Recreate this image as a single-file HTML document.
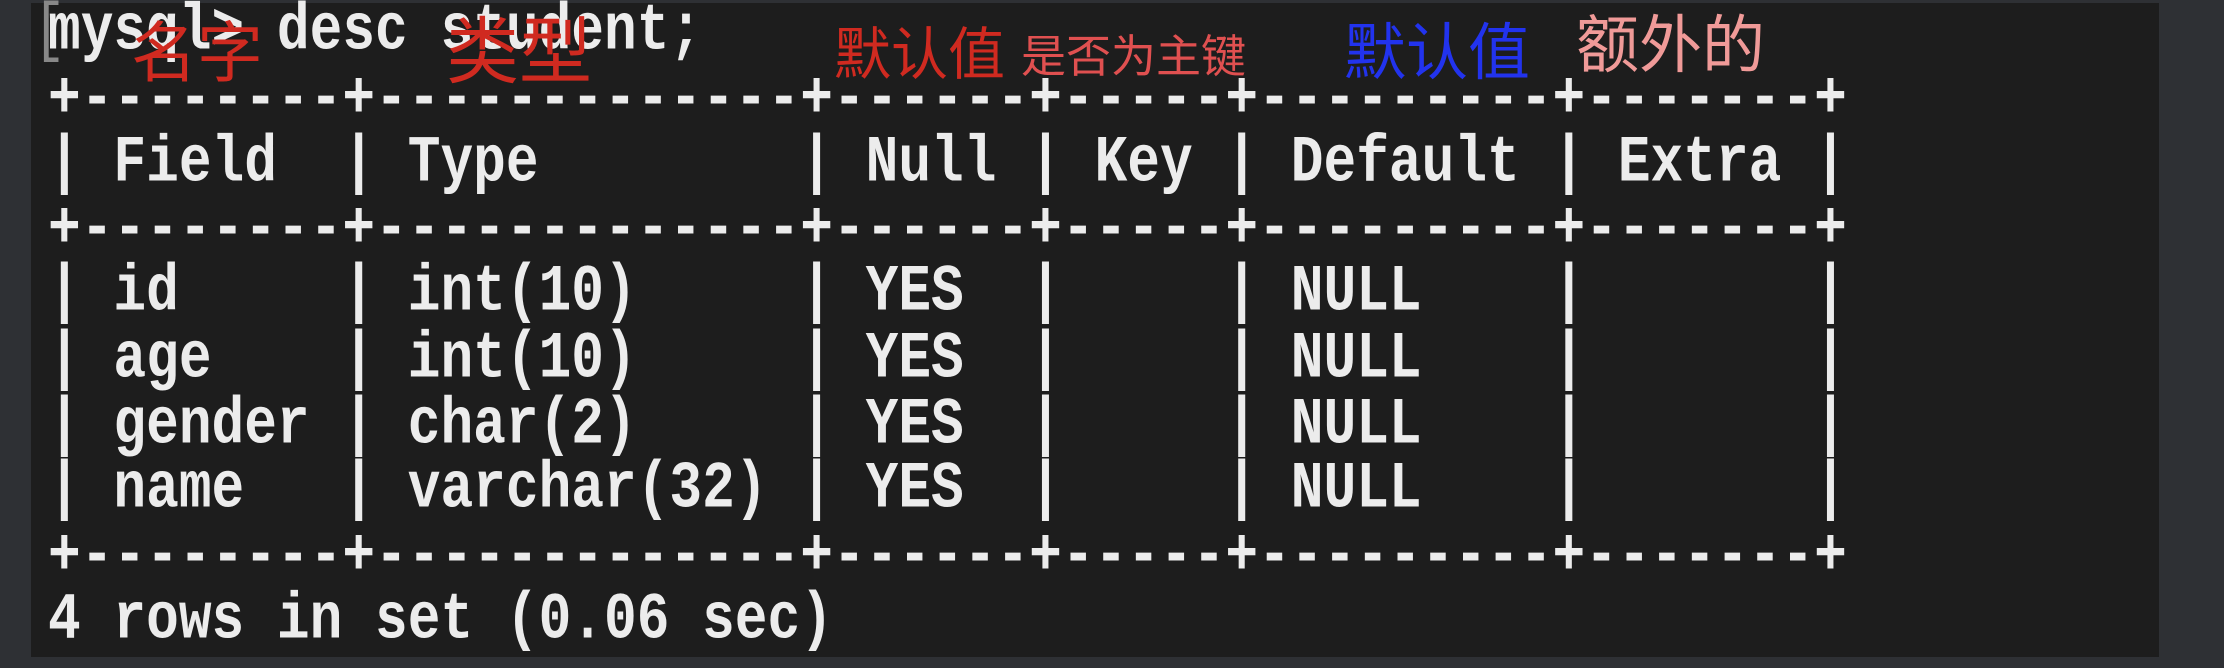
<!DOCTYPE html>
<html><head><meta charset="utf-8"><style>
html,body{margin:0;padding:0;}
body{width:2224px;height:668px;background:#2e3034;position:relative;overflow:hidden;}
#panel{position:absolute;left:31px;top:3px;width:2128px;height:654px;background:#1d1d1d;}
.l{position:absolute;left:48px;height:60px;line-height:60px;font-family:"Liberation Mono",monospace;font-size:54.5px;font-weight:bold;color:#ececec;white-space:pre;transform:scaleY(1.2);transform-origin:50% 50%;}
.c{position:absolute;font-family:"Liberation Sans","Noto Sans CJK SC",sans-serif;line-height:1;white-space:nowrap;}
</style></head><body>
<div id="panel"></div>
<div class="l" style="left:33px;top:3px;color:#888;font-weight:normal">[</div>
<div class="l" style="top:3px">mysql&gt; desc student;</div>
<div class="l" style="top:71px">+--------+-------------+------+-----+---------+-------+</div>
<div class="l" style="top:135px">| Field  | Type        | Null | Key | Default | Extra |</div>
<div class="l" style="top:201px">+--------+-------------+------+-----+---------+-------+</div>
<div class="l" style="top:264px">| id     | int(10)     | YES  |     | NULL    |       |</div>
<div class="l" style="top:331px">| age    | int(10)     | YES  |     | NULL    |       |</div>
<div class="l" style="top:397px">| gender | char(2)     | YES  |     | NULL    |       |</div>
<div class="l" style="top:461px">| name   | varchar(32) | YES  |     | NULL    |       |</div>
<div class="l" style="top:528px">+--------+-------------+------+-----+---------+-------+</div>
<div class="l" style="top:592px">4 rows in set (0.06 sec)</div>
<div class="c" style="left:131px;top:20px;font-size:66px;color:#d02a20">名字</div>
<div class="c" style="left:446px;top:16px;font-size:73px;color:#d02a20">类型</div>
<div class="c" style="left:834px;top:27px;font-size:57px;color:#d02a20">默认值</div>
<div class="c" style="left:1021px;top:34px;font-size:45px;color:#e05050">是否为主键</div>
<div class="c" style="left:1344px;top:23px;font-size:62px;color:#2233ee">默认值</div>
<div class="c" style="left:1576px;top:15px;font-size:63px;color:#f09a98">额外的</div>
</body></html>
